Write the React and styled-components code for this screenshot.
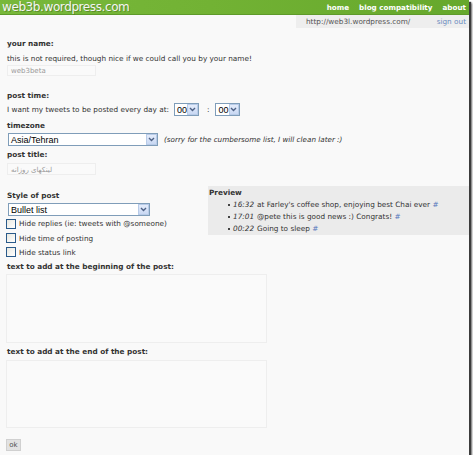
import React from "react";
import styled, { createGlobalStyle } from "styled-components";

const Global = createGlobalStyle`
  html, body { margin: 0; padding: 0; background: #ffffff; }
  body { font-family: "DejaVu Sans", Verdana, sans-serif; }
`;

const Page = styled.div`
  width: 469px;
  height: 455px;
  background: #f9f9f9;
  box-shadow: 2px 2px 1px #3c3c3c, 3px 3px 2px #777;
  font-family: "DejaVu Sans", Verdana, sans-serif;
  font-size: 7.3px;
  color: #333;
  display: flex;
  flex-direction: column;
  overflow: hidden;
`;

const Header = styled.div`
  height: 14px;
  background: linear-gradient(90deg, #78b83a 0%, #72b234 45%, #66a82c 100%);
  border-bottom: 1px solid #5e9a2a;
  display: flex;
  align-items: center;
  justify-content: space-between;
  padding: 0 3px 0 2px;
`;

const Logo = styled.div`
  font-family: "DejaVu Sans", Verdana, sans-serif;
  font-size: 12px;
  letter-spacing: -0.4px;
  color: #f4f4f4;
  text-shadow: 1px 1px 0 rgba(60, 90, 30, 0.45);
  line-height: 14px;
  margin-top: -1px;
`;

const Nav = styled.div`
  display: flex;
  gap: 10px;
`;

const NavLink = styled.span`
  color: #fff;
  font-weight: bold;
  font-size: 7.2px;
`;

const UrlBar = styled.div`
  align-self: flex-end;
  width: 160px;
  height: 13px;
  background: #eeeeee;
  display: flex;
  align-items: center;
  justify-content: space-between;
  padding: 0 3px 0 10px;
  font-size: 7.3px;
`;

const Url = styled.span`
  color: #555;
`;

const SignOut = styled.span`
  color: #6a8cc0;
`;

const Main = styled.div`
  padding: 0 0 0 7px;
  display: flex;
  flex-direction: column;
`;

const Label = styled.div`
  font-weight: bold;
  line-height: 11px;
  margin-top: ${(p) => p.$mt || 0}px;
  color: #333;
`;

const Text = styled.div`
  line-height: 11px;
  margin-top: ${(p) => p.$mt || 0}px;
`;

const Input = styled.div`
  width: 89px;
  height: ${(p) => p.$h || 11}px;
  border: 1px solid #eeeeee;
  background: #fafafa;
  color: #999;
  font-size: 7px;
  line-height: ${(p) => p.$h || 11}px;
  padding-left: 3px;
  box-sizing: border-box;
  margin-top: ${(p) => p.$mt || 0}px;
  direction: ${(p) => (p.$rtl ? "rtl" : "ltr")};
  text-align: left;
`;

const SelectBox = styled.div`
  width: ${(p) => p.$w}px;
  height: 13px;
  box-sizing: border-box;
  border: 1px solid #7f9db9;
  background: #fff;
  display: flex;
  align-items: center;
  justify-content: space-between;
  font-family: "Liberation Sans", Arial, sans-serif;
  font-size: 9px;
  color: #000;
  padding-left: 2px;
  margin-left: ${(p) => p.$ml || 0}px;
`;

const Arrow = styled.div`
  width: 11px;
  height: 11px;
  box-sizing: border-box;
  border: 1px solid #b8cbe8;
  background: linear-gradient(180deg, #e4ecfb 0%, #c9d8f3 100%);
  display: flex;
  align-items: center;
  justify-content: center;
`;

const Select = ({ w, ml, children }) => (
  <SelectBox $w={w} $ml={ml}>
    <span>{children}</span>
    <Arrow>
      <svg width="7" height="5" viewBox="0 0 7 5">
        <path d="M1 1 L3.5 3.5 L6 1" fill="none" stroke="#4d6185" strokeWidth="1.4" />
      </svg>
    </Arrow>
  </SelectBox>
);

const Row = styled.div`
  display: flex;
  align-items: center;
  margin-top: ${(p) => p.$mt || 0}px;
  height: ${(p) => p.$h || 13}px;
`;

const Note = styled.span`
  font-style: italic;
  margin-left: 6px;
  font-size: 7.2px;
`;

const Colon = styled.span`
  margin: 0 6px 0 8px;
`;

const Split = styled.div`
  display: flex;
  margin-top: 11px;
`;

const LeftCol = styled.div`
  width: 201px;
  display: flex;
  flex-direction: column;
  padding-top: 4px;
`;

const Preview = styled.div`
  flex: 1;
  height: 49px;
  background: #ebebeb;
  padding: 1px 0 0 1px;
  box-sizing: border-box;
`;

const PreviewTitle = styled.div`
  font-weight: bold;
  line-height: 11px;
`;

const List = styled.ul`
  margin: 1px 0 0 0;
  padding-left: 24px;
  list-style: none;
`;

const Item = styled.li`
  line-height: 12px;
  position: relative;
  &::before {
    content: "";
    position: absolute;
    left: -5px;
    top: 5px;
    width: 2px;
    height: 2px;
    background: #444;
  }
`;

const Time = styled.i`
  margin-right: 3px;
`;

const Hash = styled.span`
  color: #5577bb;
`;

const Check = styled.div`
  display: flex;
  align-items: center;
  height: ${(p) => p.$h || 14}px;
  margin-left: -1px;
`;

const Box = styled.span`
  width: 10px;
  height: 10px;
  box-sizing: border-box;
  border: 1px solid #2a5a8a;
  background: linear-gradient(135deg, #e8e8e0 0%, #ffffff 100%);
  margin-right: 3px;
`;

const TextArea = styled.div`
  width: 261px;
  height: ${(p) => p.$h}px;
  box-sizing: border-box;
  border: 1px solid #eeeeee;
  background: #fafafa;
  margin-top: ${(p) => p.$mt || 0}px;
  margin-left: -1px;
`;

const Button = styled.div`
  width: 15px;
  height: 12px;
  box-sizing: border-box;
  background: #e2e2e2;
  border: 1px solid #d0d0d0;
  color: #555;
  font-size: 7px;
  display: flex;
  align-items: center;
  justify-content: center;
  margin-top: 11px;
  margin-left: -1px;
`;

export default function App() {
  return (
    <>
      <Global />
      <Page>
        <Header>
          <Logo>web3b.wordpress.com</Logo>
          <Nav>
            <NavLink>home</NavLink>
            <NavLink>blog compatibility</NavLink>
            <NavLink>about</NavLink>
          </Nav>
        </Header>
        <UrlBar>
          <Url>http://web3l.wordpress.com/</Url>
          <SignOut>sign out</SignOut>
        </UrlBar>
        <Main>
          <Label $mt={10}>your name:</Label>
          <Text $mt={4}>this is not required, though nice if we could call you by your name!</Text>
          <Input $mt={1}>web3beta</Input>
          <Label $mt={14}>post time:</Label>
          <Row $mt={2}>
            I want my tweets to be posted every day at:
            <Select w={25} ml={5}>00</Select>
            <Colon>:</Colon>
            <Select w={25}>00</Select>
          </Row>
          <Label $mt={4}>timezone</Label>
          <Row $mt={2}>
            <Select w={150} ml={1}>Asia/Tehran</Select>
            <Note>(sorry for the cumbersome list, I will clean later :)</Note>
          </Row>
          <Label $mt={3}>post title:</Label>
          <Input $mt={3} $h={12} $rtl>
            لینکهای روزانه
          </Input>
          <Split>
            <LeftCol>
              <Label>Style of post</Label>
              <Row $mt={2}>
                <Select w={142} ml={1}>Bullet list</Select>
              </Row>
              <Check $h={15}>
                <Box />
                Hide replies (ie: tweets with @someone)
              </Check>
              <Check $h={14}>
                <Box />
                Hide time of posting
              </Check>
              <Check $h={14}>
                <Box />
                Hide status link
              </Check>
            </LeftCol>
            <Preview>
              <PreviewTitle>Preview</PreviewTitle>
              <List>
                <Item>
                  <Time>16:32</Time>at Farley's coffee shop, enjoying best Chai ever <Hash>#</Hash>
                </Item>
                <Item>
                  <Time>17:01</Time>@pete this is good news :) Congrats! <Hash>#</Hash>
                </Item>
                <Item>
                  <Time>00:22</Time>Going to sleep <Hash>#</Hash>
                </Item>
              </List>
            </Preview>
          </Split>
          <Label $mt={2}>text to add at the beginning of the post:</Label>
          <TextArea $mt={2} $h={69} />
          <Label $mt={3}>text to add at the end of the post:</Label>
          <TextArea $mt={3} $h={68} />
          <Button>ok</Button>
        </Main>
      </Page>
    </>
  );
}
